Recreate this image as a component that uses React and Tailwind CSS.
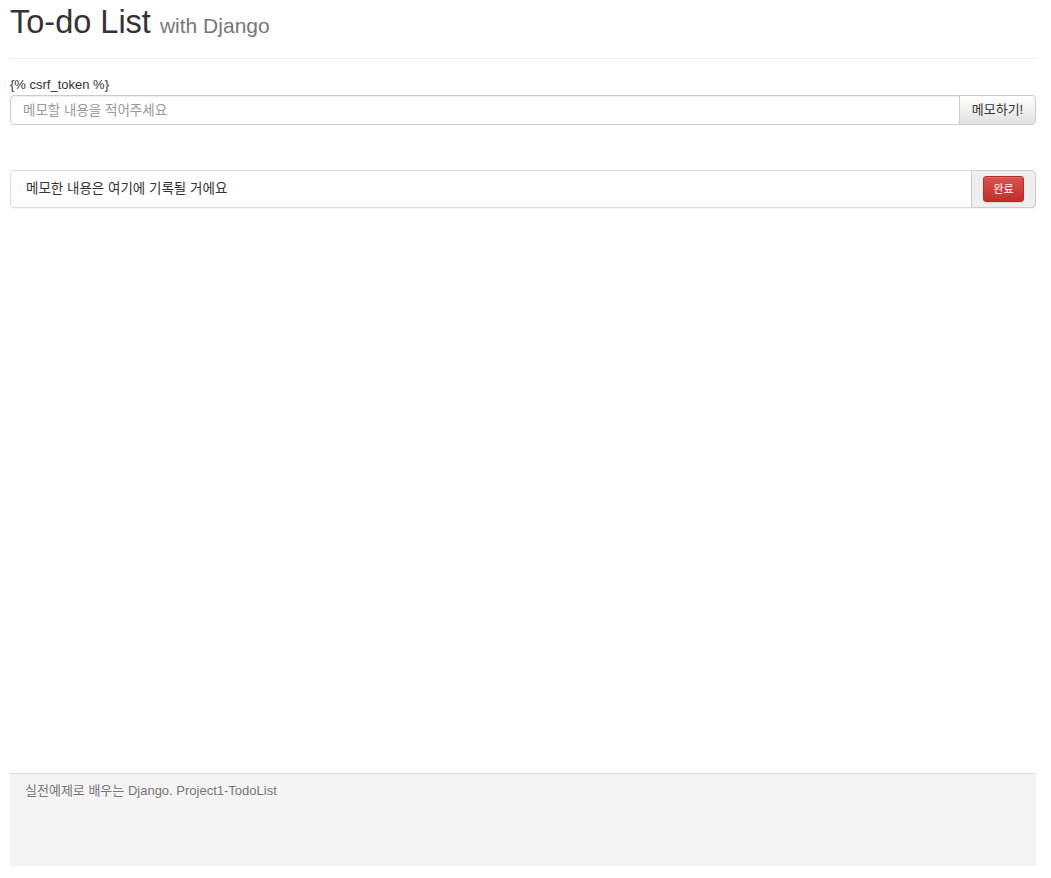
export default function App() {
  const font = { fontFamily: '"Liberation Sans", "Noto Sans CJK KR", sans-serif' };

  return (
    <div
      className="min-h-screen flex flex-col bg-white text-[#333] text-[13px] font-['Liberation_Sans','Noto_Sans_CJK_KR',sans-serif]"
      style={font}
    >
      <div className="ml-[10px] w-[1026px] flex flex-col flex-1">
        {/* Header */}
        <div className="border-b border-[#eee] pt-[2px] pb-[12px]">
          <h1 className="text-[32.5px] leading-[40px] font-normal text-[#333]">
            To-do List <small className="text-[21px] text-[#777]">with Django</small>
          </h1>
        </div>

        {/* Form */}
        <div className="mt-[16px] leading-[20px]">{'{% csrf_token %}'}</div>
        <div className="flex h-[30px]">
          <input
            className="flex-1 h-full border border-[#ccc] rounded-l-[4px] px-[12px] text-[13.5px] text-[#555] placeholder:text-[#999] shadow-[inset_0_1px_1px_rgba(0,0,0,0.075)] outline-none"
            placeholder="메모할 내용을 적어주세요"
          />
          <button className="w-[77px] h-full -ml-px border border-[#ccc] rounded-r-[4px] bg-[linear-gradient(to_bottom,#fff_0%,#e0e0e0_100%)] text-[13px] text-[#333]">
            메모하기!
          </button>
        </div>

        {/* List */}
        <div className="mt-[45px] flex h-[38px] shadow-[0_1px_1px_rgba(0,0,0,0.05)] rounded-[4px]">
          <div className="flex-1 flex items-center border border-[#ddd] rounded-l-[4px] pl-[15px] text-[13.5px] text-[#333] bg-white">
            메모한 내용은 여기에 기록될 거에요
          </div>
          <div className="w-[65px] flex items-center justify-center -ml-px border border-[#ccc] rounded-r-[4px] bg-[#eee]">
            <button className="w-[41px] h-[26px] rounded-[3px] border border-[#b92c28] bg-[linear-gradient(to_bottom,#d9534f_0%,#c12e2a_100%)] text-white text-[11px] leading-none shadow-[inset_0_1px_0_rgba(255,255,255,0.15),0_1px_1px_rgba(0,0,0,0.075)]">
              완료
            </button>
          </div>
        </div>

        {/* Footer */}
        <div className="mt-auto mb-[12px] h-[93px] bg-[#f4f4f4] border-t border-[#ddd] px-[15px] pt-[7px] text-[13px] text-[#777]">
          실전예제로 배우는 Django. Project1-TodoList
        </div>
      </div>
    </div>
  );
}
